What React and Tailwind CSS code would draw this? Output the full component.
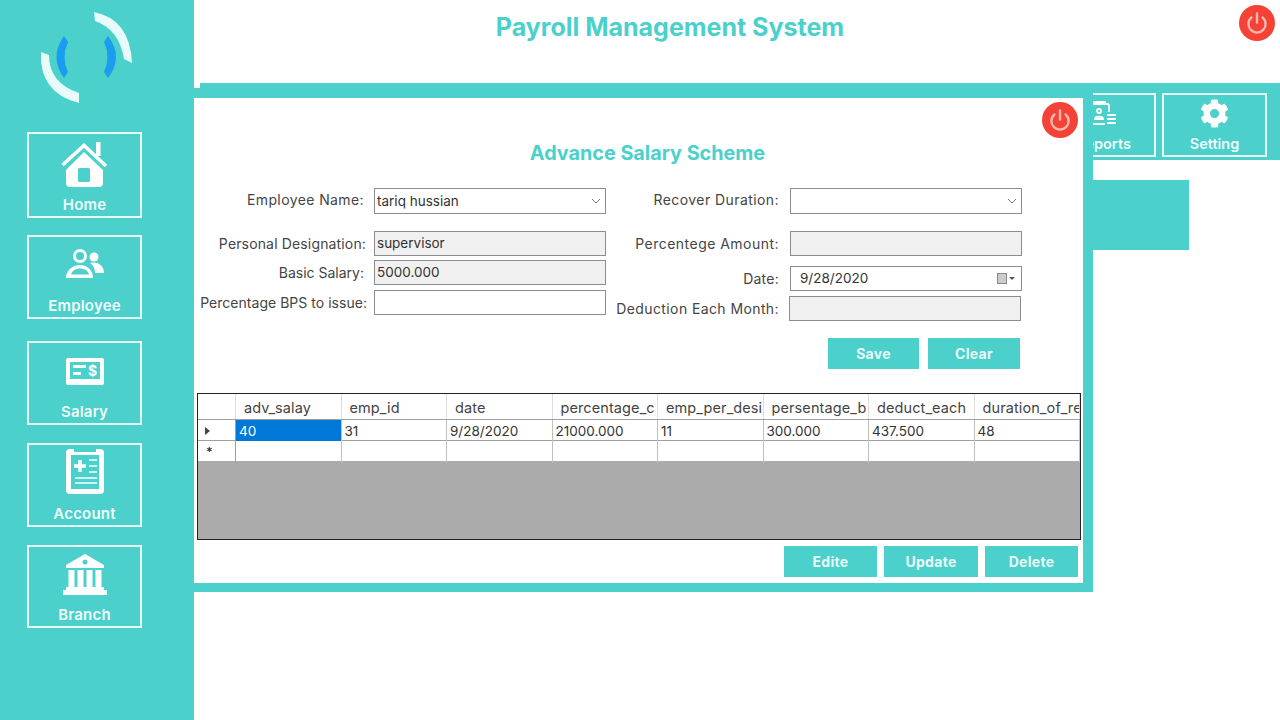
import React from 'react'
import { FaCog } from 'react-icons/fa'

const font = { fontFamily: 'Inter, "Liberation Sans", sans-serif' }

function PowerButton({ className }) {
    return (
        <div className={`flex h-9 w-9 items-center justify-center rounded-full bg-[#f44336] ${className}`}>
            <svg width="24" height="24" viewBox="0 0 24 24" fill="none" stroke="#f9b9b2" strokeWidth="2.400" strokeLinecap="round">
                <path d="M12 2.500v9" />
                <path d="M6.400 6.500a8.600 8.600 0 1 0 11.200 0" />
            </svg>
        </div>
    )
}

function Logo() {
    return (
        <svg width="104" height="104" viewBox="0 0 104 104" className="ml-[35px] mt-[5px]">
            <path d="M59 7Q95 14 97 58L89 54Q84 24 60 16Z" fill="#e6fbfa" />
            <path d="M6 47Q4 88 44 98L44 88Q14 78 14 50Z" fill="#e6fbfa" />
            <path d="M29 31L33 37Q26 52 33 67L29 73Q14 52 29 31Z" fill="#1a9cf0" />
            <path d="M73 31L69 37Q76 52 69 67L73 73Q89 52 73 31Z" fill="#1a9cf0" />
        </svg>
    )
}

function HomeIcon() {
    return (
        <svg width="48" height="48" viewBox="0 0 48 48">
            <path d="M1.500 24L23 4.500L45 25" fill="none" stroke="white" strokeWidth="3.500" />
            <rect x="35" y="1" width="4.500" height="14" fill="white" />
            <path d="M5 29L23 11L42 29V42a4 4 0 0 1-4 4H9a4 4 0 0 1-4-4Z" fill="white" />
            <rect x="17" y="27" width="12" height="14" rx="1.500" fill="#4bd0cb" />
        </svg>
    )
}

function EmployeeIcon() {
    return (
        <svg width="38" height="30" viewBox="0 0 38 30">
            <circle cx="14" cy="8" r="5.500" fill="none" stroke="white" strokeWidth="3" />
            <circle cx="28" cy="9" r="4.500" fill="white" />
            <path d="M0 30C0 21 8 17 14 17C20 17 27 21 27 30Z" fill="white" />
            <path d="M5 26.500C6 22.500 10 20.500 14 20.500C18 20.500 22 22.500 23 26.500Z" fill="#4bd0cb" />
            <path d="M24 15C32 13 38 18 38 25H29C29 20 27 17 24 15Z" fill="white" />
        </svg>
    )
}

function SalaryIcon() {
    return (
        <svg width="38" height="27" viewBox="0 0 38 27">
            <rect width="38" height="27" rx="2" fill="white" />
            <rect x="4" y="4" width="30" height="17" fill="#4bd0cb" />
            <rect x="7" y="7" width="13" height="3" fill="white" />
            <rect x="7" y="14" width="8" height="3" fill="white" />
            <text x="22" y="18" fontSize="14" fontWeight="700" fill="white" style={font}>$</text>
        </svg>
    )
}

function AccountIcon() {
    return (
        <svg width="38" height="46" viewBox="0 0 38 46">
            <path d="M4 1h4v3h22V1h4a4 4 0 0 1 4 4v37a4 4 0 0 1-4 4H4a4 4 0 0 1-4-4V5a4 4 0 0 1 4-4Z" fill="white" />
            <rect x="5" y="7" width="28" height="34" fill="#4bd0cb" />
            <path d="M14 12v12M8 18h12" stroke="white" strokeWidth="3.500" />
            <path d="M23 12h8M23 18h8M23 24h8M9 30h22M9 35h22" stroke="white" strokeWidth="1.500" />
        </svg>
    )
}

function BranchIcon() {
    return (
        <svg width="44" height="41" viewBox="0 0 44 41">
            <path d="M22 0L41 11V14H3V11Z" fill="white" />
            <circle cx="22" cy="8" r="2.500" fill="#4bd0cb" />
            <rect x="5.500" y="16" width="6" height="17" fill="white" />
            <rect x="14.500" y="16" width="6" height="17" fill="white" />
            <rect x="23.500" y="16" width="6" height="17" fill="white" />
            <rect x="32.500" y="16" width="6" height="17" fill="white" />
            <rect x="3" y="33" width="38" height="3" fill="white" />
            <rect y="36" width="44" height="5" fill="white" />
        </svg>
    )
}

function ReportsIcon() {
    return (
        <svg width="26" height="26" viewBox="0 0 26 26" fill="none" stroke="white" strokeWidth="1.800">
            <path d="M3 4V2h12" />
            <path d="M1 6a2 2 0 0 1 2-2h13a2 2 0 0 1 2 2v6M14 24H3a2 2 0 0 1-2-2V6" />
            <circle cx="8" cy="11" r="2" />
            <path d="M4 19c0-3 8-3 8 0Z" />
            <path d="M16 15h9M16 19h9M16 23h9" strokeWidth="2.200" />
        </svg>
    )
}

function NavButton({ label, icon, className, iconClass = '' }) {
    return (
        <div className={`ml-[27px] flex w-[115px] flex-col items-center border-2 border-[#e6fbfa] ${className}`}>
            <div className={`flex flex-1 items-center justify-center ${iconClass}`}>{icon}</div>
            <span className="pb-[2px] text-[15px] leading-[18px] font-semibold tracking-[0.2px] text-[#f0fdfc]">{label}</span>
        </div>
    )
}

function FormRow({ label, labelClass, rowClass = '', children }) {
    return (
        <div className={`flex items-center justify-end ${rowClass}`}>
            <span className={`whitespace-nowrap text-[14px] leading-[20px] text-[#444] ${labelClass}`}>{label}</span>
            {children}
        </div>
    )
}

function Field({ value, readOnly, select, date, className = 'h-[25px] w-[232px]' }) {
    return (
        <div className={`flex items-center justify-between border border-[#8c8c8c] px-[2px] text-[13.500px] text-[#333] ${readOnly ? 'bg-[#f0f0f0]' : 'bg-white'} ${className}`}>
            <span className={date ? 'pl-[7px]' : ''}>{value}</span>
            {select && (
                <svg width="10" height="6" viewBox="0 0 10 6" fill="none" stroke="#777" className="mr-[2px]">
                    <path d="M1 1l4 4 4-4" />
                </svg>
            )}
            {date && (
                <span className="mr-[4px] flex items-center gap-[2px]">
                    <span className="h-[11px] w-[10px] border border-[#888] bg-[#ccc]"></span>
                    <span className="h-0 w-0 border-x-[3px] border-t-[3px] border-x-transparent border-t-[#555]"></span>
                </span>
            )}
        </div>
    )
}

function ActionButton({ label, className }) {
    return (
        <div className={`flex items-center justify-center bg-[#4bd0cb] text-[14px] font-bold tracking-[0.3px] text-[#e9fbfa] ${className}`}>{label}</div>
    )
}

const gridCols = 'grid grid-cols-[38px_repeat(8,105.500px)]'

const columns = ['adv_salay', 'emp_id', 'date', 'percentage_c', 'emp_per_desi', 'persentage_b', 'deduct_each', 'duration_of_re']
const row = ['40', '31', '9/28/2020', '21000.000', '11', '300.000', '437.500', '48']

function SalaryTable() {
    return (
        <div className="ml-[3px] flex h-[147px] w-[884px] flex-col overflow-hidden border border-[#222] bg-[#ababab] text-[13.500px] text-[#333]">
            <div className={`${gridCols} h-[26px] border-b border-[#a0a0a0] bg-white`}>
                <div className="border-r border-[#ddd]"></div>
                {columns.map((c) => (
                    <div key={c} className="overflow-hidden whitespace-nowrap border-r border-[#ddd] pl-[8px] pt-[3px] text-[14.500px] tracking-[0.1px] text-[#444]">{c}</div>
                ))}
            </div>
            <div className={`${gridCols} h-[21px] border-b border-[#a0a0a0] bg-white`}>
                <div className="flex items-center border-r border-[#a0a0a0] pl-[7px]">
                    <span className="h-0 w-0 border-y-[4px] border-l-[5px] border-y-transparent border-l-[#444]"></span>
                </div>
                {row.map((v, i) => (
                    <div key={i} className={`border-r border-[#c0c0c0] pl-[3px] leading-[22px] ${i === 0 ? 'bg-[#0078d7] text-white' : ''}`}>{v}</div>
                ))}
            </div>
            <div className={`${gridCols} h-[20px] bg-white`}>
                <div className="border-r border-[#a0a0a0] pl-[8px] text-[12px] leading-[22px] font-bold">*</div>
                {row.map((v, i) => (
                    <div key={i} className="border-r border-[#c0c0c0]"></div>
                ))}
            </div>
        </div>
    )
}

export default function App() {
    return (
        <div className="flex h-[720px] w-[1280px] overflow-hidden bg-white" style={font}>
            <aside className="flex w-[194px] shrink-0 flex-col bg-[#4bd0cb]">
                <div className="h-[132px]"><Logo /></div>
                <NavButton label="Home" icon={<HomeIcon />} className="h-[86px]" />
                <NavButton label="Employee" icon={<EmployeeIcon />} iconClass="pb-[8px]" className="mt-[17px] h-[84px]" />
                <NavButton label="Salary" icon={<SalaryIcon />} iconClass="pb-[4px]" className="mt-[22px] h-[84px]" />
                <NavButton label="Account" icon={<AccountIcon />} iconClass="pb-[8px]" className="mt-[18px] h-[84px]" />
                <NavButton label="Branch" icon={<BranchIcon />} iconClass="pb-[4px]" className="mt-[18px] h-[83px]" />
            </aside>

            <main className="relative flex-1">
                <header className="relative flex h-[83px] justify-center">
                    <h1 className="ml-[-134px] pt-[11px] text-[25px] leading-[32px] font-bold text-[#4bd0cb]">Payroll Management System</h1>
                    <PowerButton className="absolute right-[5px] top-[5px]" />
                </header>

                <div className="flex h-[77px] justify-end gap-[6px] bg-[#4bd0cb] pr-[13px] pt-[10px]">
                    <div className="flex h-[64px] w-[105px] flex-col items-center justify-between border-2 border-[#e6fbfa] pt-[5px]">
                        <ReportsIcon />
                        <span className="pb-[2px] text-[14.500px] leading-[18px] font-semibold text-[#f0fdfc]">Reports</span>
                    </div>
                    <div className="flex h-[64px] w-[105px] flex-col items-center justify-between border-2 border-[#e6fbfa] pt-[4px]">
                        <FaCog className="text-[29px] text-white" />
                        <span className="pb-[2px] text-[14.500px] leading-[18px] font-semibold text-[#f0fdfc]">Setting</span>
                    </div>
                </div>

                <div className="ml-[899px] mt-[20px] h-[70px] w-[96px] bg-[#4bd0cb]"></div>

                {/* child window sits over the tab bar */}
                <section className="absolute left-0 top-[83px] h-[509px] w-[899px] border-b-[9px] border-r-[10px] border-t-[15px] border-[#4bd0cb] bg-white">
                    <PowerButton className="absolute left-[848px] top-[4px]" />
                    <h2 className="ml-[18px] h-[90px] pt-[43px] text-center text-[19.800px] leading-[24px] font-bold text-[#4bd0cb]">Advance Salary Scheme</h2>

                    <div className="flex h-[134px]">
                        <div className="w-[412px]">
                            <FormRow label="Employee Name:" labelClass="mb-[2px] mr-[10px] tracking-[0.4px]">
                                <Field value="tariq hussian" select className="h-[26px] w-[232px]" />
                            </FormRow>
                            <FormRow label="Personal Designation:" labelClass="mr-[8px] tracking-[0.15px]" rowClass="mt-[17px]">
                                <Field value="supervisor" readOnly />
                            </FormRow>
                            <FormRow label="Basic Salary:" labelClass="mr-[10px]" rowClass="mt-[4px]">
                                <Field value="5000.000" readOnly />
                            </FormRow>
                            <FormRow label="Percentage BPS to issue:" labelClass="mr-[7px] tracking-[0.03px]" rowClass="mt-[5px]">
                                <Field />
                            </FormRow>
                        </div>
                        <div className="w-[416px]">
                            <FormRow label="Recover Duration:" labelClass="mb-[2px] mr-[11px] tracking-[0.43px]">
                                <Field select className="h-[26px] w-[232px]" />
                            </FormRow>
                            <FormRow label="Percentege Amount:" labelClass="mr-[11px] tracking-[0.47px]" rowClass="mt-[17px]">
                                <Field readOnly />
                            </FormRow>
                            <FormRow label="Date:" labelClass="mr-[11px] tracking-[0.25px]" rowClass="mt-[10px]">
                                <Field value="9/28/2020" date />
                            </FormRow>
                            <FormRow label="Deduction Each Month:" labelClass="mr-[10px] tracking-[0.4px]" rowClass="mr-[1px] mt-[5px]">
                                <Field readOnly className="h-[25px] w-[232px]" />
                            </FormRow>
                        </div>
                    </div>

                    <div className="ml-[634px] mt-[16px] flex h-[31px] gap-[9px]">
                        <ActionButton label="Save" className="w-[91px]" />
                        <ActionButton label="Clear" className="w-[92px]" />
                    </div>

                    <div className="mt-[24px]"><SalaryTable /></div>

                    <div className="ml-[590px] mt-[6px] flex h-[31px] gap-[7px]">
                        <ActionButton label="Edite" className="w-[93px]" />
                        <ActionButton label="Update" className="w-[94px]" />
                        <ActionButton label="Delete" className="w-[93px]" />
                    </div>
                </section>

                {/* small notch at the corner of the window */}
                <div className="absolute left-0 top-[83px] h-[5px] w-[6px] bg-white"></div>
            </main>
        </div>
    )
}
